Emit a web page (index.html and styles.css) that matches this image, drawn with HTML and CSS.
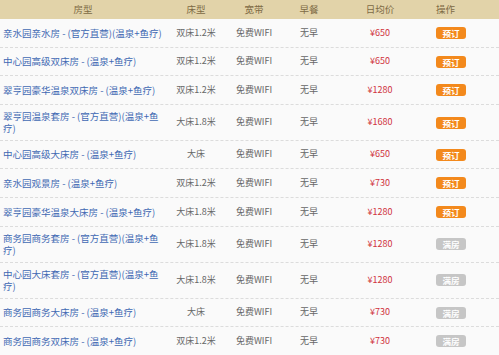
FILE: index.html
```html
<!DOCTYPE html>
<html lang="zh-CN">
<head>
<meta charset="utf-8">
<title>房型列表</title>
<link rel="stylesheet" href="styles.css">
</head>
<body>
<div class="table">
  <div class="row head">
    <div class="c name">房型</div>
    <div class="c bed">床型</div>
    <div class="c net">宽带</div>
    <div class="c meal">早餐</div>
    <div class="c price">日均价</div>
    <div class="c op">操作</div>
  </div>
  <div class="row">
    <div class="c name"><a>亲水园亲水房 - (官方直营)(温泉+鱼疗)</a></div>
    <div class="c bed">双床1.2米</div><div class="c net">免费WIFI</div><div class="c meal">无早</div>
    <div class="c price">¥650</div><div class="c op"><span class="btn">预订</span></div>
  </div>
  <div class="row">
    <div class="c name"><a>中心园高级双床房 - (温泉+鱼疗)</a></div>
    <div class="c bed">双床1.2米</div><div class="c net">免费WIFI</div><div class="c meal">无早</div>
    <div class="c price">¥650</div><div class="c op"><span class="btn">预订</span></div>
  </div>
  <div class="row">
    <div class="c name"><a>翠亨园豪华温泉双床房 - (温泉+鱼疗)</a></div>
    <div class="c bed">双床1.2米</div><div class="c net">免费WIFI</div><div class="c meal">无早</div>
    <div class="c price">¥1280</div><div class="c op"><span class="btn">预订</span></div>
  </div>
  <div class="row">
    <div class="c name"><a>翠亨园温泉套房 - (官方直营)(温泉+鱼疗)</a></div>
    <div class="c bed">大床1.8米</div><div class="c net">免费WIFI</div><div class="c meal">无早</div>
    <div class="c price">¥1680</div><div class="c op"><span class="btn">预订</span></div>
  </div>
  <div class="row">
    <div class="c name"><a>中心园高级大床房 - (温泉+鱼疗)</a></div>
    <div class="c bed">大床</div><div class="c net">免费WIFI</div><div class="c meal">无早</div>
    <div class="c price">¥650</div><div class="c op"><span class="btn">预订</span></div>
  </div>
  <div class="row">
    <div class="c name"><a>亲水园观景房 - (温泉+鱼疗)</a></div>
    <div class="c bed">双床1.2米</div><div class="c net">免费WIFI</div><div class="c meal">无早</div>
    <div class="c price">¥730</div><div class="c op"><span class="btn">预订</span></div>
  </div>
  <div class="row">
    <div class="c name"><a>翠亨园豪华温泉大床房 - (温泉+鱼疗)</a></div>
    <div class="c bed">大床1.8米</div><div class="c net">免费WIFI</div><div class="c meal">无早</div>
    <div class="c price">¥1280</div><div class="c op"><span class="btn">预订</span></div>
  </div>
  <div class="row">
    <div class="c name"><a>商务园商务套房 - (官方直营)(温泉+鱼疗)</a></div>
    <div class="c bed">大床1.8米</div><div class="c net">免费WIFI</div><div class="c meal">无早</div>
    <div class="c price">¥1280</div><div class="c op"><span class="btn full">满房</span></div>
  </div>
  <div class="row">
    <div class="c name"><a>中心园大床套房 - (官方直营)(温泉+鱼疗)</a></div>
    <div class="c bed">大床1.8米</div><div class="c net">免费WIFI</div><div class="c meal">无早</div>
    <div class="c price">¥1280</div><div class="c op"><span class="btn full">满房</span></div>
  </div>
  <div class="row">
    <div class="c name"><a>商务园商务大床房 - (温泉+鱼疗)</a></div>
    <div class="c bed">大床</div><div class="c net">免费WIFI</div><div class="c meal">无早</div>
    <div class="c price">¥730</div><div class="c op"><span class="btn full">满房</span></div>
  </div>
  <div class="row">
    <div class="c name"><a>商务园商务双床房 - (温泉+鱼疗)</a></div>
    <div class="c bed">双床1.2米</div><div class="c net">免费WIFI</div><div class="c meal">无早</div>
    <div class="c price">¥730</div><div class="c op"><span class="btn full">满房</span></div>
  </div>
</div>
</body>
</html>
```
FILE: styles.css
```css
html, body {
  margin: 0;
  padding: 0;
  background: #f9f9f9;
}
body {
  font-family: "Noto Sans CJK SC", "Microsoft YaHei", sans-serif;
  font-size: 9px;
  color: #666;
}
.table {
  width: 499px;
}
.row {
  display: grid;
  grid-template-columns: 166px 60px 56px 54px 88px 1fr;
  align-items: center;
  min-height: 28.6px;
  box-sizing: border-box;
  border-bottom: 1px dashed #dcdcdc;
  background: #fafafa;
}
.row.head {
  min-height: 19px;
  background: #e2d3a9;
  border-bottom: none;
  color: #7d6a45;
  font-size: 9.5px;
}
.c {
  text-align: center;
  line-height: 12.5px;
}
.name {
  text-align: left;
  padding: 5px 0 5px 3px;
  font-size: 9.5px;
}
.head .name {
  text-align: center;
  padding: 0;
}
.name a {
  color: #4169b3;
}
.price {
  color: #d0323c;
}
.head .price {
  color: #7d6a45;
}
.op {
  text-align: left;
  padding-left: 12px;
}
.btn {
  display: inline-block;
  width: 30px;
  height: 12px;
  line-height: 12px;
  border-radius: 3px;
  background: #f3891c;
  color: #fff;
  font-weight: bold;
  font-size: 8.5px;
  text-align: center;
  vertical-align: middle;
}
.btn.full {
  background: #c6c6c6;
}
```
